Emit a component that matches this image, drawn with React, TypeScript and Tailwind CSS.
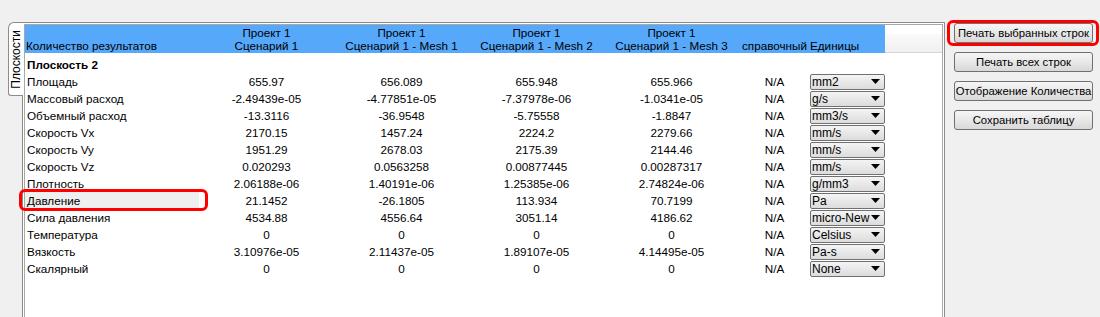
import React from "react";

const rows: [string, string, string, string, string, string][] = [
  ["Площадь", "655.97", "656.089", "655.948", "655.966", "mm2"],
  ["Массовый расход", "-2.49439e-05", "-4.77851e-05", "-7.37978e-06", "-1.0341e-05", "g/s"],
  ["Объемный расход", "-13.3116", "-36.9548", "-5.75558", "-1.8847", "mm3/s"],
  ["Скорость Vx", "2170.15", "1457.24", "2224.2", "2279.66", "mm/s"],
  ["Скорость Vy", "1951.29", "2678.03", "2175.39", "2144.46", "mm/s"],
  ["Скорость Vz", "0.020293", "0.0563258", "0.00877445", "0.00287317", "mm/s"],
  ["Плотность", "2.06188e-06", "1.40191e-06", "1.25385e-06", "2.74824e-06", "g/mm3"],
  ["Давление", "21.1452", "-26.1805", "113.934", "70.7199", "Pa"],
  ["Сила давления", "4534.88", "4556.64", "3051.14", "4186.62", "micro-New"],
  ["Температура", "0", "0", "0", "0", "Celsius"],
  ["Вязкость", "3.10976e-05", "2.11437e-05", "1.89107e-05", "4.14495e-05", "Pa-s"],
  ["Скалярный", "0", "0", "0", "0", "None"],
];

const font = { fontFamily: '"Liberation Sans", Arial, sans-serif' };

function Dropdown({ value }: { value: string }) {
  return (
    <div className="w-[75px] h-[16px] flex items-center border border-[#707070] rounded-[2px] bg-gradient-to-b from-[#f4f4f4] to-[#dcdcdc] pl-[1px] pr-[4px]">
      <span className="flex-1 overflow-hidden whitespace-nowrap text-[12px] leading-[14px] text-black">{value}</span>
      <svg width="9" height="5" viewBox="0 0 9 5" className="shrink-0 ml-[1px]">
        <polygon points="0,0 9,0 4.5,5" fill="#000" />
      </svg>
    </div>
  );
}

function Btn({ label }: { label: string }) {
  return (
    <div className="w-[139px] h-[20px] flex items-center justify-center border border-[#707070] rounded-[3px] bg-gradient-to-b from-[#f6f6f6] via-[#e8e8e8] to-[#d8d8d8] text-[11.3px] text-black whitespace-nowrap">
      {label}
    </div>
  );
}

const cols = "grid grid-cols-[174px_135px_135px_135px_135px_71px_75px]";

export default function App() {
  return (
    <div className="relative w-[1100px] h-[317px] overflow-hidden bg-[#f0f0f0] text-black" style={font}>
      <div className="flex pt-[22px] pl-[8px]">
        {/* vertical tab */}
        <div className="relative w-[15px] h-[74px] bg-white border border-r-0 border-[#8c8c8c] rounded-tl-[6px] rounded-bl-[3px] flex items-center justify-center z-10 -mr-[1px]">
          <span
            className="text-[12px] leading-[14px] whitespace-nowrap"
            style={{ writingMode: "vertical-rl", transform: "rotate(180deg)" }}
          >
            Плоскости
          </span>
        </div>
        {/* panel */}
        <div className="w-[923px] h-[320px] border border-[#8c8c8c] bg-white p-[1px]">
          <div className="w-full h-full border-l border-t border-r border-[#a8a8a8] bg-white">
            {/* header */}
            <div className="flex h-[28px]">
              <div className={`${cols} bg-[#56a8fb] h-[28px] text-[11.7px] leading-[13px]`}>
                <div className="flex items-end pl-[1px] pb-[1px] whitespace-nowrap">Количество результатов</div>
                {["Сценарий 1", "Сценарий 1 - Mesh 1", "Сценарий 1 - Mesh 2", "Сценарий 1 - Mesh 3"].map((s) => (
                  <div key={s} className="flex flex-col items-center justify-end pb-[1px] whitespace-nowrap">
                    <span>Проект 1</span>
                    <span>{s}</span>
                  </div>
                ))}
                <div className="flex items-end justify-center pb-[1px] whitespace-nowrap">справочный</div>
                <div className="flex items-end pb-[1px] whitespace-nowrap">Единицы</div>
              </div>
              <div className="flex-1 flex flex-col">
                <div className="h-[9px] bg-white" />
                <div className="flex-1 bg-gradient-to-b from-[#fafafa] to-[#f0f0f0] border-b border-[#d5d5d5]" />
              </div>
            </div>
            {/* body */}
            <div className="pt-[3px] text-[11.7px]">
              <div className="h-[17px] flex items-center pl-[2px] font-bold">Плоскость 2</div>
              {rows.map((r) => (
                <div key={r[0]} className={`${cols} h-[17px]`}>
                  <div className={`flex items-center pl-[2px] ${r[0] === "Давление" ? "bg-[#efefef]" : ""}`}>{r[0]}</div>
                  <div className="flex items-center justify-center">{r[1]}</div>
                  <div className="flex items-center justify-center">{r[2]}</div>
                  <div className="flex items-center justify-center">{r[3]}</div>
                  <div className="flex items-center justify-center">{r[4]}</div>
                  <div className="flex items-center justify-center">N/A</div>
                  <div className="flex items-center">
                    <Dropdown value={r[5]} />
                  </div>
                </div>
              ))}
            </div>
          </div>
        </div>
        {/* buttons */}
        <div className="ml-[9px] flex flex-col gap-[9px] pt-[1px]">
          <Btn label="Печать выбранных строк" />
          <Btn label="Печать всех строк" />
          <Btn label="Отображение Количества" />
          <Btn label="Сохранить таблицу" />
        </div>
      </div>
      {/* red highlights */}
      <div className="absolute left-[19px] top-[189px] w-[189px] h-[22px] border-[3px] border-[#ff0000] rounded-[6px]" />
      <div className="absolute left-[947px] top-[20px] w-[152px] h-[26px] border-[3px] border-[#ff0000] rounded-[6px]" />
    </div>
  );
}
